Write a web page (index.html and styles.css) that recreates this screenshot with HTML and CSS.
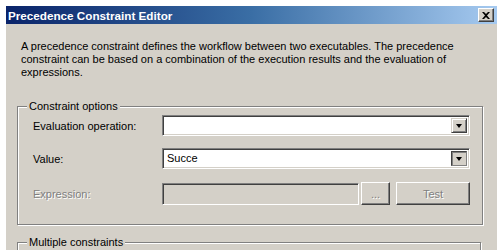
FILE: index.html
```html
<!DOCTYPE html>
<html>
<head>
<meta charset="utf-8">
<link rel="stylesheet" href="styles.css">
</head>
<body>
<div class="window">
  <div class="titlebar">
    <span class="title">Precedence Constraint Editor</span>
    <span class="close"><svg width="8" height="7" viewBox="0 0 8 7"><path d="M0 0h2l2 2 2-2h2L5 3.5 8 7H6L4 5 2 7H0l3-3.5z" fill="#000"/></svg></span>
  </div>
  <div class="content">
    <p class="desc">A precedence constraint defines the workflow between two executables. The precedence constraint can be based on a combination of the execution results and the evaluation of expressions.</p>
    <fieldset class="group">
      <legend>Constraint options</legend>
      <div class="row">
        <span class="label">Evaluation operation:</span>
        <div class="combo"><span class="value"></span><span class="drop"><i></i></span></div>
      </div>
      <div class="row">
        <span class="label">Value:</span>
        <div class="combo"><span class="value">Succe</span><span class="drop pressed"><i></i></span></div>
      </div>
      <div class="row">
        <span class="label disabled">Expression:</span>
        <div class="textbox"></div>
        <span class="btn small">...</span>
        <span class="btn test">Test</span>
      </div>
    </fieldset>
    <fieldset class="group second">
      <legend>Multiple constraints</legend>
    </fieldset>
  </div>
</div>
</body>
</html>
```
FILE: styles.css
```css
html, body {
  margin: 0;
  padding: 0;
  background: #ffffff;
  overflow: hidden;
}
body {
  font-family: "Liberation Sans", Arial, sans-serif;
  font-size: 11px;
  color: #000;
}
.window {
  margin: 6px 7px 0 6px;
  height: 260px;
  background: #d4d0c8;
}
.titlebar {
  height: 18px;
  display: flex;
  align-items: center;
  justify-content: space-between;
  padding: 0 3px 0 2px;
  background: linear-gradient(to right, #0a246a 0%, #3a6ea5 50%, #a6caf0 100%);
}
.title {
  color: #fff;
  font-family: "Liberation Sans", Arial, sans-serif;
  font-weight: bold;
  font-size: 11.7px;
}
.close {
  width: 16px;
  height: 14px;
  box-sizing: border-box;
  background: #d4d0c8;
  border: 1px solid;
  border-color: #fff #404040 #404040 #fff;
  box-shadow: inset -1px -1px #808080;
  display: flex;
  align-items: center;
  justify-content: center;
}
.content {
  padding: 16px 16px 0 11px;
}
.desc {
  margin: 0 0 0 4px;
  line-height: 13px;
  width: 440px;
}
.group {
  margin: 21px 0 0 0;
  padding: 2px 12px 19px 15px;
  border: 1px solid #808080;
  box-shadow: inset 1px 1px #fff, 1px 1px #fff;
}
.group legend {
  padding: 0 2px;
  margin-left: -6px;
  background: #d4d0c8;
  line-height: 13px;
}
.group.second {
  margin-top: 11px;
  height: 40px;
}
.row {
  display: flex;
  align-items: center;
  height: 21px;
  margin-bottom: 12px;
}
.row:last-child {
  margin-bottom: 0;
  margin-top: 13px;
  height: 23px;
}
.label {
  width: 129px;
  flex: none;
}
.label.disabled {
  color: #808080;
  text-shadow: 1px 1px #fff;
}
.combo {
  flex: 1;
  height: 21px;
  box-sizing: border-box;
  display: flex;
  background: #fff;
  border: 1px solid;
  border-color: #808080 #fff #fff #808080;
  box-shadow: inset 1px 1px #404040, inset -1px -1px #d4d0c8;
  padding: 2px;
}
.combo .value {
  flex: 1;
  padding-left: 2px;
  line-height: 15px;
}
.drop {
  width: 16px;
  height: 15px;
  flex: none;
  box-sizing: border-box;
  background: #d4d0c8;
  border: 1px solid;
  border-color: #d4d0c8 #404040 #404040 #d4d0c8;
  box-shadow: inset 1px 1px #fff, inset -1px -1px #808080;
  display: flex;
  align-items: center;
  justify-content: center;
}
.drop.pressed {
  border-color: #404040 #808080 #808080 #404040;
  box-shadow: inset 1px 1px #808080;
}
.drop i {
  width: 0;
  height: 0;
  border-left: 3.5px solid transparent;
  border-right: 3.5px solid transparent;
  border-top: 4px solid #000;
}
.textbox {
  width: 197px;
  height: 22px;
  box-sizing: border-box;
  background: #d4d0c8;
  border: 1px solid;
  border-color: #808080 #fff #fff #808080;
  box-shadow: inset 1px 1px #404040;
}
.btn {
  height: 23px;
  box-sizing: border-box;
  border: 1px solid;
  border-color: #fff #404040 #404040 #fff;
  box-shadow: inset -1px -1px #808080;
  display: flex;
  align-items: center;
  justify-content: center;
  color: #808080;
  text-shadow: 1px 1px #fff;
}
.btn.small {
  width: 29px;
  margin-left: 2px;
}
.btn.test {
  width: 74px;
  margin-left: 6px;
}
```
